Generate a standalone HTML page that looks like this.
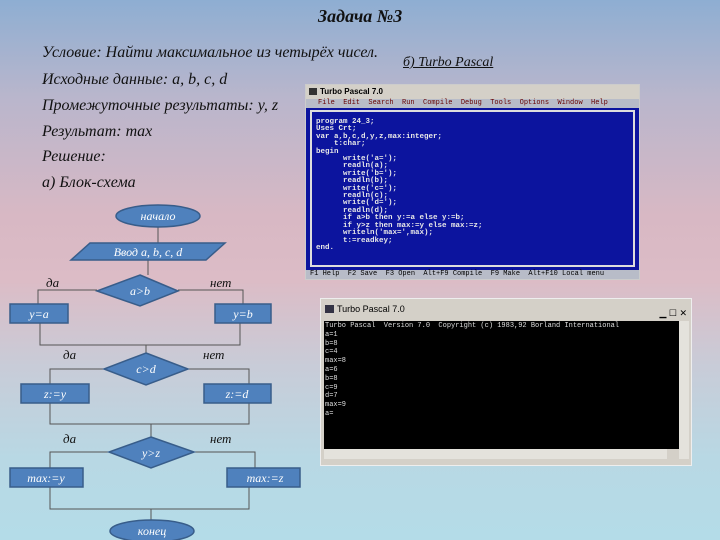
<!DOCTYPE html>
<html><head><meta charset="utf-8"><style>
body{margin:0;width:720px;height:540px;overflow:hidden;position:relative;
background:linear-gradient(180deg,#8eaed2 0%,#b9b6cc 18%,#d8b8c4 40%,#dcbcc6 52%,#c8ccd8 68%,#b8d8e4 85%,#b4dce8 100%);
font-family:"Liberation Serif","DejaVu Serif",serif;}
.t{position:absolute;font-style:italic;font-size:16px;color:#111;white-space:nowrap;}
.mono{font-family:"Liberation Mono",monospace;font-size:7.5px;line-height:7.4px;white-space:pre;position:absolute;font-weight:bold;}
</style></head><body>
<div class="t" style="left:318px;top:6px;font-size:18px;font-weight:bold">Задача №3</div>
<div class="t" style="left:42px;top:44px">Условие: Найти максимальное из четырёх чисел.</div>
<div class="t" style="left:403px;top:55px;font-size:14px;text-decoration:underline">б) Turbo Pascal</div>
<div class="t" style="left:42px;top:71px">Исходные данные: a, b, c, d</div>
<div class="t" style="left:42px;top:97px">Промежуточные результаты: y, z</div>
<div class="t" style="left:42px;top:123px">Результат: max</div>
<div class="t" style="left:42px;top:148px">Решение:</div>
<div class="t" style="left:42px;top:174px">а) Блок-схема</div>

<!-- Turbo Pascal editor -->
<div style="position:absolute;left:305px;top:84px;width:333px;height:194px;background:#0c149e;border:1px solid #ccc">
 <div style="height:14px;background:#d4d0c8;font:bold 8px 'Liberation Sans',sans-serif;line-height:14px;padding-left:14px;color:#000">Turbo Pascal 7.0<span style="position:absolute;left:3px;top:3px;width:8px;height:7px;background:#333"></span></div>
 <div style="height:9px;background:#b8bcc8;font:7px 'Liberation Mono',monospace;line-height:9px;color:#600;padding-left:12px;white-space:pre">File  Edit  Search  Run  Compile  Debug  Tools  Options  Window  Help</div>
 <div style="position:absolute;left:4px;top:25px;right:4px;bottom:12px;border:2px double #ddd"></div>
 <div class="mono" style="left:10px;top:34px;color:#e8e8e8">program 24_3;
Uses Crt;
var a,b,c,d,y,z,max:integer;
    t:char;
begin
      write('a=');
      readln(a);
      write('b=');
      readln(b);
      write('c=');
      readln(c);
      write('d=');
      readln(d);
      if a>b then y:=a else y:=b;
      if y>z then max:=y else max:=z;
      writeln('max=',max);
      t:=readkey;
end.</div>
 <div style="position:absolute;left:0;right:0;bottom:0;height:9px;background:#b8bcc8;font:7px 'Liberation Mono',monospace;line-height:9px;color:#000;padding-left:4px;white-space:pre">F1 Help  F2 Save  F3 Open  Alt+F9 Compile  F9 Make  Alt+F10 Local menu</div>
</div>

<!-- console -->
<div style="position:absolute;left:320px;top:298px;width:370px;height:166px;background:#d4d0c8;border:1px solid #eee">
 <div style="height:20px;font:9px 'Liberation Sans',sans-serif;line-height:20px;padding-left:16px;color:#000">Turbo Pascal 7.0<span style="position:absolute;left:4px;top:6px;width:9px;height:8px;background:#334"></span><span style="position:absolute;right:4px;top:4px;font-size:9px">▁ ☐ ✕</span></div>
 <div style="position:absolute;left:3px;top:22px;width:355px;height:128px;background:#000"></div>
 <div class="mono" style="left:4px;top:23px;color:#ddd;font-size:7px;line-height:8.8px;font-weight:normal">Turbo Pascal  Version 7.0  Copyright (c) 1983,92 Borland International
a=1
b=8
c=4
max=8
a=6
b=8
c=9
d=7
max=9
a=</div>
 <div style="position:absolute;left:358px;top:22px;width:10px;height:138px;background:#e4e2dc"></div>
 <div style="position:absolute;left:3px;top:150px;width:343px;height:10px;background:#e4e2dc"></div>
</div>

<svg style="position:absolute;left:0;top:0" width="720" height="540">
<g stroke="#555" fill="none" stroke-width="1">
<path d="M158 226V243M148 260V275M97 290H38V305M178 290H243V305M40 323V345H240V323M146 345V353M104 369H50V384M188 369H249V384M50 403V424H249V403M151 424V437M109 452H50V468M194 452H255V468M50 487V509H249V487M151 509V521"/>
</g>
<g fill="#4f81bd" stroke="#385d8a" stroke-width="1.5">
<ellipse cx="158" cy="216" rx="42" ry="11"/>
<polygon points="90,243 225,243 206,260 71,260"/>
<polygon points="140,275 178,291 140,306 97,291"/>
<rect x="10" y="304" width="58" height="19"/>
<rect x="215" y="304" width="56" height="19"/>
<polygon points="146,353 188,369 146,385 104,369"/>
<rect x="21" y="384" width="68" height="19"/>
<rect x="204" y="384" width="67" height="19"/>
<polygon points="151,437 194,452 151,468 109,452"/>
<rect x="10" y="468" width="73" height="19"/>
<rect x="227" y="468" width="73" height="19"/>
<ellipse cx="152" cy="531" rx="42" ry="11"/>
</g>
<g fill="#fff" font-family="Liberation Serif,serif" font-style="italic" font-size="12" text-anchor="middle">
<text x="158" y="220">начало</text>
<text x="148" y="256">Ввод a, b, c, d</text>
<text x="140" y="295">a&gt;b</text>
<text x="39" y="318">y=a</text>
<text x="243" y="318">y=b</text>
<text x="146" y="373">c&gt;d</text>
<text x="55" y="398">z:=y</text>
<text x="237" y="398">z:=d</text>
<text x="151" y="457">y&gt;z</text>
<text x="46" y="482">max:=y</text>
<text x="265" y="482">max:=z</text>
<text x="152" y="535">конец</text>
</g>
<g fill="#111" font-family="Liberation Serif,serif" font-style="italic" font-size="13">
<text x="46" y="287">да</text><text x="210" y="287">нет</text>
<text x="63" y="359">да</text><text x="203" y="359">нет</text>
<text x="63" y="443">да</text><text x="210" y="443">нет</text>
</g>
</svg>
</body></html>
